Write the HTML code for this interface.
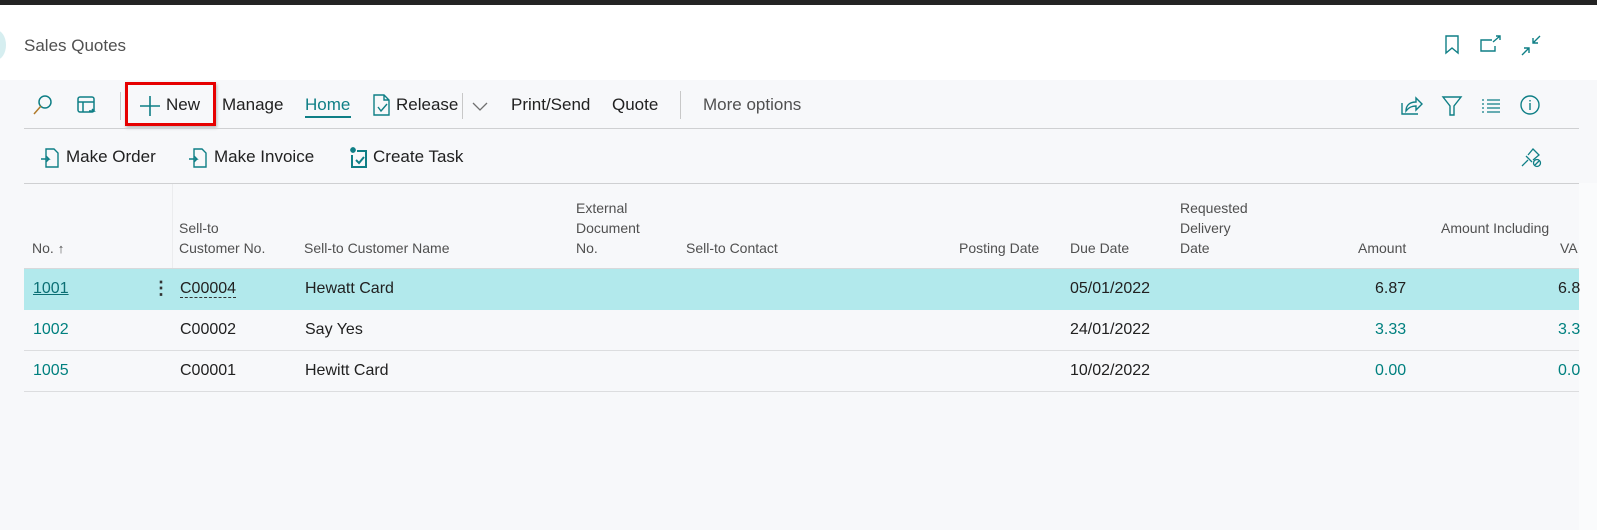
<!DOCTYPE html>
<html><head><style>
*{margin:0;padding:0;box-sizing:border-box}
body{width:1597px;height:530px;overflow:hidden;background:#f7f8fa;font-family:"Liberation Sans",sans-serif;position:relative;color:#212121}
.a{position:absolute;white-space:nowrap}
.tb{font-size:17px;color:#212121}
.h{font-size:14px;color:#505050;line-height:20px}
.d{font-size:16px}
.t{color:#00807f}
.line{position:absolute;height:1px;background:#cfd0d2}
svg{position:absolute}
</style></head><body>
<div class="a" style="left:0;top:0;width:1597px;height:5px;background:#232323"></div>
<div class="a" style="left:0;top:5px;width:1597px;height:75px;background:#fff"></div>
<div class="a" style="left:-14px;top:30px;width:20px;height:30px;border-radius:50%;background:#d6eef0"></div>
<div class="a" style="left:24px;top:36px;font-size:17px;color:#505050">Sales Quotes</div>
<!-- top right icons -->
<svg style="left:1440px;top:34px" width="24" height="22" viewBox="0 0 24 22" fill="none" stroke="#0f7f86" stroke-width="1.4"><path d="M6 2h12v17l-6-5-6 5z"/></svg>
<svg style="left:1478px;top:34px" width="26" height="22" viewBox="0 0 26 22" fill="none" stroke="#0f7f86" stroke-width="1.4"><path d="M14 6H3v11h14v-5M15 8l7-6M18 2h4v4"/></svg>
<svg style="left:1518px;top:34px" width="26" height="24" viewBox="0 0 26 24" fill="none" stroke="#0f7f86" stroke-width="1.4"><path d="M4 21l7-7M6 14h5v5M22 2l-7 7M15 4v5h5"/></svg>
<!-- toolbar -->
<svg style="left:32px;top:94px" width="22" height="22" viewBox="0 0 22 22" fill="none" stroke="#0f7f86" stroke-width="1.5"><circle cx="13" cy="8" r="6"/><path d="M9 12l-7 8" stroke="#b07a2a"/></svg>
<svg style="left:76px;top:95px" width="22" height="22" viewBox="0 0 22 22" fill="none" stroke="#0f7f86" stroke-width="1.5"><rect x="2" y="2" width="16" height="15" rx="2"/><path d="M2 7h16M7 7v10M13 16h5l-2-2"/></svg>
<div class="a" style="left:120px;top:92px;width:1px;height:28px;background:#c8c8c8"></div>
<svg style="left:139px;top:95px" width="22" height="22" viewBox="0 0 22 22" fill="none" stroke="#0f7f86" stroke-width="1.6"><path d="M11 1v20M1 11h20"/></svg>
<div class="a tb" style="left:166px;top:95px">New</div>
<div class="a" style="left:125px;top:82px;width:91px;height:44px;border:3px solid #e60000;box-shadow:1px 2px 3px rgba(0,0,0,.25)"></div>
<div class="a tb" style="left:222px;top:95px">Manage</div>
<div class="a tb" style="left:305px;top:95px;color:#0f7f86">Home</div>
<div class="a" style="left:305px;top:116px;width:46px;height:2px;background:#0f7f86"></div>
<svg style="left:372px;top:93px" width="20" height="24" viewBox="0 0 20 24" fill="none" stroke="#0f7f86" stroke-width="1.4"><path d="M2 2h10l5 5v15H2z M12 2v5h5M6 14l3 4 6-7"/></svg>
<div class="a tb" style="left:396px;top:95px">Release</div>
<div class="a" style="left:462px;top:93px;width:1px;height:26px;background:#c8c8c8"></div>
<svg style="left:471px;top:100px" width="18" height="12" viewBox="0 0 18 12" fill="none" stroke="#707070" stroke-width="1.3"><path d="M2 3l7 7 7-7"/></svg>
<div class="a tb" style="left:511px;top:95px">Print/Send</div>
<div class="a tb" style="left:612px;top:95px">Quote</div>
<div class="a" style="left:680px;top:91px;width:1px;height:28px;background:#c8c8c8"></div>
<div class="a tb" style="left:703px;top:95px;color:#505050">More options</div>
<svg style="left:1400px;top:94px" width="24" height="22" viewBox="0 0 24 22" fill="none" stroke="#0f7f86" stroke-width="1.4"><path d="M2 9v11h16M6 17c0-6 4-9 10-9V4l6 6-6 6v-4c-4 0-7 1-10 5z"/></svg>
<svg style="left:1441px;top:95px" width="22" height="22" viewBox="0 0 22 22" fill="none" stroke="#0f7f86" stroke-width="1.4"><path d="M2 2h18l-7 9v9h-4v-9z"/></svg>
<svg style="left:1480px;top:97px" width="22" height="18" viewBox="0 0 22 18" fill="none" stroke="#0f7f86" stroke-width="1.3"><path d="M2 3h2M7 3h13M2 7h2M7 7h13M2 11h2M7 11h13M2 15h2M7 15h13"/></svg>
<svg style="left:1519px;top:94px" width="22" height="22" viewBox="0 0 22 22" fill="none" stroke="#0f7f86" stroke-width="1.4"><circle cx="11" cy="11" r="9"/><path d="M11 9v7M11 6v1.5"/></svg>
<div class="line" style="left:24px;top:128px;width:1555px"></div>
<!-- action row -->
<svg style="left:40px;top:147px" width="20" height="22" viewBox="0 0 20 22" fill="none" stroke="#0f7f86" stroke-width="1.4"><path d="M6 2h8l4 4v14H6z M1 12h8l-3-3M9 12l-3 3"/></svg>
<div class="a tb" style="left:66px;top:147px">Make Order</div>
<svg style="left:188px;top:147px" width="20" height="22" viewBox="0 0 20 22" fill="none" stroke="#0f7f86" stroke-width="1.4"><path d="M6 2h8l4 4v14H6z M1 12h8l-3-3M9 12l-3 3"/></svg>
<div class="a tb" style="left:214px;top:147px">Make Invoice</div>
<svg style="left:347px;top:145px" width="22" height="24" viewBox="0 0 22 24" fill="none" stroke="#0f7f86" stroke-width="1.6"><path d="M4 3l4 4M8 3L4 7M6 2v6M3 5h6"/><path d="M10 6h9v16H5V10M9 15l3 3 5-6" stroke-width="2"/></svg>
<div class="a tb" style="left:373px;top:147px">Create Task</div>
<svg style="left:1519px;top:145px" width="24" height="24" viewBox="0 0 24 24" fill="none" stroke="#0f7f86" stroke-width="1.3"><path d="M3 21l6-6M7 11l6 6M9 10l5-6 6 6-6 5"/><circle cx="18" cy="18" r="3.5"/><path d="M16 20l4-4"/></svg>
<div class="line" style="left:24px;top:183px;width:1555px"></div>
<div class="a" style="left:1579px;top:183px;width:18px;height:347px;background:#fafbfc"></div>
<!-- header -->
<div class="a" style="left:172px;top:184px;width:1px;height:84px;background:#ebecee"></div>
<div class="a h" style="left:32px;top:238px">No. <span style="font-size:13px">&#8593;</span></div>
<div class="a h" style="left:179px;top:218px">Sell-to<br>Customer No.</div>
<div class="a h" style="left:304px;top:238px">Sell-to Customer Name</div>
<div class="a h" style="left:576px;top:198px">External<br>Document<br>No.</div>
<div class="a h" style="left:686px;top:238px">Sell-to Contact</div>
<div class="a h" style="left:959px;top:238px">Posting Date</div>
<div class="a h" style="left:1070px;top:238px">Due Date</div>
<div class="a h" style="left:1180px;top:198px">Requested<br>Delivery<br>Date</div>
<div class="a h" style="left:1358px;top:238px">Amount</div>
<div class="a h" style="left:1441px;top:218px;width:138px;overflow:hidden">Amount Including<br><span style="padding-left:119px">VA</span></div>
<div class="line" style="left:24px;top:268px;width:1555px;background:#d8d9db"></div>
<!-- rows -->
<div class="a" style="left:24px;top:269px;width:1555px;height:41px;background:#b2e9ec"></div>
<div class="a d t" style="left:33px;top:280px;color:#0b6f74;text-decoration:underline">1001</div>
<div class="a" style="left:152px;top:278px;font-size:18px;color:#333;font-weight:bold">&#8942;</div>
<div class="a d" style="left:180px;top:280px;border-bottom:1px dashed #333;line-height:17px">C00004</div>
<div class="a d" style="left:305px;top:280px">Hewatt Card</div>
<div class="a d" style="left:1070px;top:280px">05/01/2022</div>
<div class="a d" style="left:1375px;top:280px">6.87</div>
<div class="a d" style="left:1558px;top:280px">6.8</div>
<div class="line" style="left:24px;top:350px;width:1555px;background:#dcdddf"></div>
<div class="a d t" style="left:33px;top:321px">1002</div>
<div class="a d" style="left:180px;top:321px">C00002</div>
<div class="a d" style="left:305px;top:321px">Say Yes</div>
<div class="a d" style="left:1070px;top:321px">24/01/2022</div>
<div class="a d t" style="left:1375px;top:321px">3.33</div>
<div class="a d t" style="left:1558px;top:321px">3.3</div>
<div class="a d t" style="left:33px;top:362px">1005</div>
<div class="a d" style="left:180px;top:362px">C00001</div>
<div class="a d" style="left:305px;top:362px">Hewitt Card</div>
<div class="a d" style="left:1070px;top:362px">10/02/2022</div>
<div class="a d t" style="left:1375px;top:362px">0.00</div>
<div class="a d t" style="left:1558px;top:362px">0.0</div>
<div class="line" style="left:24px;top:391px;width:1555px;background:#dcdddf"></div>
</body></html>
